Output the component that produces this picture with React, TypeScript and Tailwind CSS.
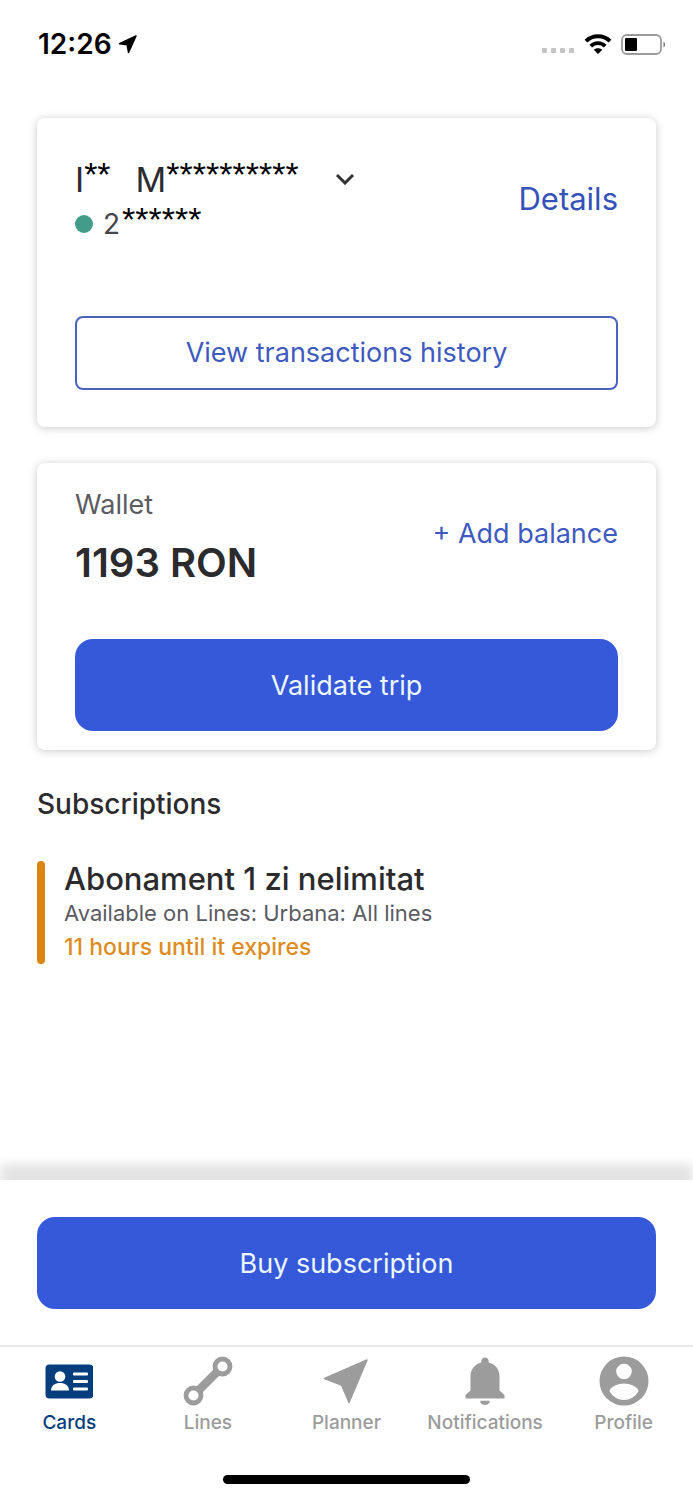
import type { ReactNode } from 'react'

const TABS: { label: string; icon: ReactNode; active?: boolean }[] = [
  { label: 'Cards', icon: <CardsIcon />, active: true },
  { label: 'Lines', icon: <LinesIcon /> },
  { label: 'Planner', icon: <PlannerIcon /> },
  { label: 'Notifications', icon: <BellIcon /> },
  { label: 'Profile', icon: <ProfileIcon /> },
]

function CardsIcon() {
  return (
    <svg className="w-12 h-12" viewBox="0 0 48 48" fill="currentColor" aria-hidden="true">
      <rect x="0.500" y="7.500" width="48" height="34" rx="4" />
      <g fill="#fff">
        <circle cx="15" cy="19.500" r="5.300" />
        <path d="M6 33.500c0-5 4-7.500 9-7.500s9 2.500 9 7.500z" />
        <rect x="28" y="15.500" width="15" height="3" rx="1" />
        <rect x="28" y="23" width="15" height="3" rx="1" />
        <rect x="28" y="30.500" width="15" height="3" rx="1" />
      </g>
    </svg>
  )
}

function LinesIcon() {
  return (
    <svg className="w-12 h-12 overflow-visible" viewBox="0 0 48 48" fill="none" stroke="currentColor" aria-hidden="true">
      <path d="M14 34L34 14" strokeWidth="8.500" />
      <circle cx="38.500" cy="9.500" r="7.500" strokeWidth="4.800" fill="#fff" />
      <circle cx="9.500" cy="38.500" r="7.500" strokeWidth="4.800" fill="#fff" />
    </svg>
  )
}

function PlannerIcon() {
  return (
    <svg className="w-12 h-12" viewBox="0 0 48 48" fill="currentColor" stroke="currentColor" strokeLinejoin="round" aria-hidden="true">
      <path d="M45 3L2.500 21.500L19.500 28L27 45.500z" strokeWidth="1.500" />
    </svg>
  )
}

function BellIcon() {
  return (
    <svg className="w-12 h-12" viewBox="0 0 48 48" fill="currentColor" aria-hidden="true">
      <path d="M24 0.500c2 0 3.700 1.600 3.700 3.700v1.200C34 7 38.500 12 38.500 19v14.500l5 4.500v3.500h-39V38l5-4.500V19c0-7 4.500-12 10.800-13.600V4.200c0-2.100 1.700-3.700 3.700-3.700z" />
      <path d="M19.200 43.800h9.600c0 2.400-2.200 4.200-4.800 4.200s-4.800-1.800-4.800-4.200z" />
    </svg>
  )
}

function ProfileIcon() {
  return (
    <svg className="w-12 h-12 overflow-visible" viewBox="0 0 48 48" fill="currentColor" aria-hidden="true">
      <circle cx="24" cy="24" r="24.500" />
      <circle cx="24" cy="14.500" r="7.800" fill="#fff" />
      <path d="M9.500 34.500c0-5 9-8 14.500-8s14.500 3 14.500 8c-3.500 5-8.500 8.500-14.500 8.500s-11-3.500-14.500-8.500z" fill="#fff" />
    </svg>
  )
}

function StatusBar() {
  return (
    <header className="h-[118px] pl-[38px] pr-[27px] pt-6 flex items-start justify-between text-black">
      <div className="flex items-center gap-[6px] h-10">
        <span className="text-[28px] font-semibold leading-10">12:26</span>
        <svg className="w-[19px] h-[19px]" viewBox="0 0 19 19" fill="currentColor" stroke="currentColor" strokeLinejoin="round" aria-hidden="true">
          <path d="M18 1L1.500 8.800L9.200 9.800L10.500 17.500z" strokeWidth="1.500" />
        </svg>
      </div>
      <div className="flex items-center h-10">
        <div className="flex gap-[4px] mt-3 mr-[10px]">
          {[0, 1, 2, 3].map((i) => (
            <span key={i} className="w-[5px] h-[5px] rounded-[1px] bg-[#c4c4c4]" />
          ))}
        </div>
        <svg className="w-7 h-5 mr-[9px]" viewBox="0 0 28 20" fill="none" stroke="currentColor" aria-hidden="true">
          <path d="M2 7.200C8.500 0.600 19.500 0.600 26 7.200" strokeWidth="4" />
          <path d="M6.800 12.200C11 8.200 17 8.200 21.200 12.200" strokeWidth="3.800" />
          <path d="M14 20l-4.200-4.300c2.400-2 6-2 8.400 0z" fill="currentColor" stroke="none" />
        </svg>
        <svg className="w-[45px] h-[21px]" viewBox="0 0 45 21" aria-hidden="true">
          <rect x="1" y="1" width="39" height="19" rx="5" fill="#fff" stroke="#9b9b9b" strokeWidth="1.800" />
          <rect x="4" y="4" width="12" height="13" rx="1" fill="#000" />
          <path d="M42.500 7.500c2 1 2 5 0 6z" fill="#777" />
        </svg>
      </div>
    </header>
  )
}

// Masked part of a personal value, raised to the cap height of the letter before it
function Mask({ count }: { count: number }) {
  return (
    <span className="pb-[10px] font-['Liberation_Sans',sans-serif] text-[34px] leading-8 text-black">
      {'*'.repeat(count)}
    </span>
  )
}

function AccountCard() {
  return (
    <section className="h-[309px] px-[38px] pt-9 pb-[37px] flex flex-col justify-between rounded-lg bg-white shadow-[0_1px_8px_rgba(0,0,0,0.22)]">
      <div className="flex items-start justify-between">
        <div>
          <button className="flex items-center h-[50px] text-[34px] text-[#2b2b30]">
            <span className="flex items-center">I<Mask count={2} /></span>
            <span className="ml-[25px] flex items-center">M<Mask count={10} /></span>
            <svg className="ml-9 w-5 h-3" viewBox="0 0 20 12" fill="none" stroke="#333" strokeWidth="3" aria-hidden="true">
              <path d="M2 2l8 8 8-8" />
            </svg>
          </button>
          <p className="flex items-center h-10 text-[28px] leading-10 text-[#45454b]">
            <span className="w-[18px] h-[18px] mr-[10px] rounded-full bg-[#439c89]" />
            <span className="mr-[2px]">2</span>
            <Mask count={6} />
          </p>
        </div>
        <a href="#details" className="mt-6 text-[31px] leading-[42px] text-[#3552b8]">Details</a>
      </div>
      <button className="h-[74px] rounded-lg border-2 border-[#4a63bd] text-[27px] text-[#3f5abf]">
        View transactions history
      </button>
    </section>
  )
}

function WalletCard() {
  return (
    <section className="h-[287px] mt-9 px-[38px] pt-[22px] pb-[19px] flex flex-col justify-between rounded-lg bg-white shadow-[0_1px_8px_rgba(0,0,0,0.22)]">
      <div className="flex items-start justify-between">
        <div>
          <h2 className="text-[27px] leading-10 text-[#5b5b62]">Wallet</h2>
          <p className="mt-[10px] text-[40px] leading-[56px] font-semibold text-[#2b2b2e]">1193 RON</p>
        </div>
        <a href="#add" className="mt-7 text-[27px] leading-[42px] text-[#3f5abf]">+ Add balance</a>
      </div>
      <button className="h-[92px] pt-[2px] rounded-[18px] bg-[#3659d9] text-[27px] text-[#ecf6ff]">Validate trip</button>
    </section>
  )
}

export default function App() {
  return (
    <div className="min-h-screen flex flex-col bg-white font-['Inter',sans-serif] overflow-hidden">
      <StatusBar />

      <main className="flex-1 px-[37px]">
        <AccountCard />
        <WalletCard />

        <h2 className="mt-[34px] text-[28px] leading-10 font-medium text-[#2b2b2e]">Subscriptions</h2>
        <article className="mt-[37px] flex h-[103px]">
          <span className="w-2 rounded-full bg-[#dc8412]" />
          <div className="ml-[19px]">
            <h3 className="text-[31px] leading-9 font-medium text-[#2b2b2e]">Abonament 1 zi nelimitat</h3>
            <p className="text-[22px] leading-8 text-[#5b5b62]">Available on Lines: Urbana: All lines</p>
            <p className="text-[23px] leading-9 font-medium text-[#dc8c22]">11 hours until it expires</p>
          </div>
        </article>
      </main>

      <footer className="bg-white shadow-[0_-16px_10px_rgba(0,0,0,0.11)]">
        <div className="px-[37px] pt-[37px] pb-9 flex">
          <button className="flex-1 h-[92px] pt-[2px] rounded-[18px] bg-[#3659d9] text-[27px] text-[#ecf6ff]">
            Buy subscription
          </button>
        </div>
        <nav className="grid grid-cols-5 h-[130px] pt-[10px] border-t-2 border-[#e8e8e8]">
          {TABS.map((tab) => (
            <a
              key={tab.label}
              href={`#${tab.label.toLowerCase()}`}
              className={`flex flex-col items-center text-[19px] leading-7 font-medium ${
                tab.active ? 'text-[#063d7d]' : 'text-[#9c9c9c]'
              }`}
            >
              {tab.icon}
              <span className="mt-1">{tab.label}</span>
            </a>
          ))}
        </nav>
        <div className="mx-auto mb-4 w-[247px] h-[9px] rounded-full bg-black" />
      </footer>
    </div>
  )
}
